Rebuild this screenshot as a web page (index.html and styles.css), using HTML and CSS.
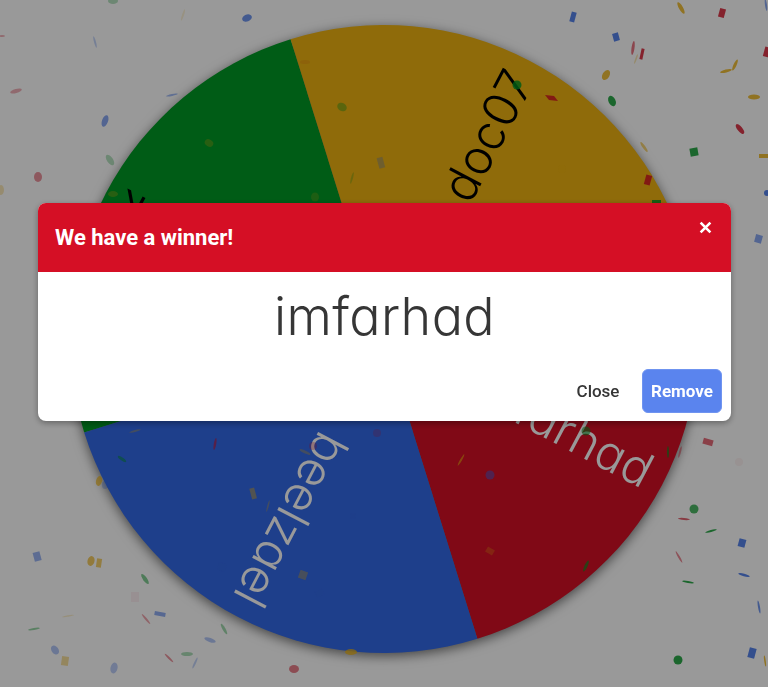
FILE: index.html
```html
<!DOCTYPE html>
<html lang="en">
<head>
<meta charset="utf-8">
<title>We have a winner</title>
<link rel="stylesheet" href="styles.css">
</head>
<body>
<main class="stage">
<svg class="canvas" viewBox="0 0 768 687" width="768" height="687">
  <g class="wheel">
    <path class="s-green" d="M384 339L84.2 432.4A314 314 0 0 1 290.6 39.2Z"/>
    <path class="s-yellow" d="M384 339L290.6 39.2A314 314 0 0 1 683.8 245.6Z"/>
    <path class="s-red" d="M384 339L683.8 245.6A314 314 0 0 1 477.4 638.8Z"/>
    <path class="s-blue" d="M384 339L477.4 638.8A314 314 0 0 1 84.2 432.4Z"/>
  </g>
  <text class="name dark" transform="translate(384 339) rotate(-152.3) translate(298 14)" text-anchor="end">k</text>
  <text class="name dark" transform="translate(384 339) rotate(-62.3) translate(298 14)" text-anchor="end">doc07</text>
  <text class="name light" transform="translate(384 339) rotate(27.7) translate(298 13)" text-anchor="end">imfarhad</text>
  <text class="name light" transform="translate(384 339) rotate(117.7) translate(298 15)" text-anchor="end">beelzael</text>

  <g class="c-g">
    <ellipse cx="113" cy="1" rx="5" ry="3" opacity=".35"/>
    <ellipse cx="110" cy="160" rx="3" ry="6" transform="rotate(-35 110 160)" opacity=".35"/>
    <ellipse cx="342" cy="107" rx="5" ry="4" transform="rotate(30 342 107)" opacity=".45"/>
    <ellipse cx="612" cy="101" rx="3.5" ry="5.5" transform="rotate(-25 612 101)"/>
    <circle cx="517" cy="85" r="4.5"/>
    <rect x="690" y="148" width="8" height="8" transform="rotate(-10 694 152)"/>
    <circle cx="586" cy="431" r="4.5" opacity=".7"/>
    <ellipse cx="122" cy="459" rx="5" ry="1.5" transform="rotate(35 122 459)" opacity=".6"/>
    <ellipse cx="145" cy="579" rx="2" ry="6" transform="rotate(-35 145 579)" opacity=".6"/>
    <ellipse cx="34" cy="629" rx="6" ry="1" transform="rotate(-10 34 629)" opacity=".5"/>
    <ellipse cx="224" cy="629" rx="1.5" ry="6" transform="rotate(-30 224 629)" opacity=".45"/>
    <ellipse cx="187" cy="654" rx="6" ry="2" opacity=".4"/>
    <ellipse cx="586" cy="566" rx="1.5" ry="6" transform="rotate(25 586 566)" opacity=".8"/>
    <ellipse cx="668" cy="452" rx="1" ry="6" opacity=".8"/>
    <circle cx="694" cy="509" r="4.5" opacity=".85"/>
    <ellipse cx="711" cy="531" rx="6" ry="1" transform="rotate(-15 711 531)"/>
    <ellipse cx="688" cy="582" rx="6" ry="1" transform="rotate(10 688 582)"/>
    <circle cx="678" cy="660" r="4.5"/>
    <ellipse cx="352" cy="178" rx="1" ry="6" transform="rotate(15 352 178)" opacity=".3"/>
    <rect x="652" y="200" width="9" height="3"/>
  </g>
  <g class="c-b">
    <ellipse cx="247" cy="18" rx="5" ry="3.5" transform="rotate(-20 247 18)" opacity=".85"/>
    <ellipse cx="95" cy="42" rx="1" ry="6" transform="rotate(-15 95 42)" opacity=".35"/>
    <ellipse cx="172" cy="95" rx="6" ry="1" transform="rotate(-12 172 95)" opacity=".55"/>
    <ellipse cx="105" cy="121" rx="3" ry="6" transform="rotate(20 105 121)" opacity=".7"/>
    <rect x="570.5" y="12" width="5" height="10" transform="rotate(15 573 17)"/>
    <rect x="613" y="33" width="6" height="8" transform="rotate(-15 616 37)"/>
    <ellipse cx="766" cy="5" rx="1" ry="6" transform="rotate(-8 766 5)" opacity=".7"/>
    <circle cx="767" cy="193" r="3"/>
    <rect x="755" y="235" width="7" height="8" transform="rotate(15 759 239)" opacity=".7"/>
    <circle cx="490" cy="475" r="4.5" opacity=".6"/>
    <ellipse cx="105" cy="485" rx="3" ry="4" opacity=".35"/>
    <rect x="33.5" y="552" width="7" height="9" transform="rotate(-15 37 556)" opacity=".6"/>
    <rect x="154.5" y="612" width="11" height="4" transform="rotate(10 160 614)" opacity=".65"/>
    <ellipse cx="210" cy="640" rx="6" ry="2" transform="rotate(20 210 640)" opacity=".45"/>
    <ellipse cx="55" cy="650" rx="3.5" ry="5" transform="rotate(-35 55 650)" opacity=".45"/>
    <ellipse cx="114" cy="668" rx="3.5" ry="5.5" transform="rotate(15 114 668)" opacity=".4"/>
    <ellipse cx="195" cy="663" rx="1" ry="6" transform="rotate(25 195 663)" opacity=".35"/>
    <rect x="738.5" y="539" width="7" height="8" transform="rotate(15 742 543)"/>
    <ellipse cx="744" cy="575" rx="6" ry="1.2" transform="rotate(15 744 575)"/>
    <ellipse cx="759" cy="607" rx="1" ry="6.5" transform="rotate(-10 759 607)" opacity=".85"/>
    <rect x="748.5" y="648" width="7" height="10" transform="rotate(15 752 653)"/>
    <rect x="378" y="157" width="6" height="11" transform="rotate(-15 382 163)" opacity=".35"/>
    <rect x="316" y="590" width="8" height="6" transform="rotate(-25 320 594)" opacity=".35"/>
    <rect x="218" y="563" width="8" height="8" transform="rotate(15 222 567)" opacity=".3"/>
    <circle cx="353" cy="516" r="3" opacity=".12"/>
  </g>
  <g class="c-r">
    <ellipse cx="2" cy="36" rx="3" ry="1" opacity=".4"/>
    <ellipse cx="16" cy="91" rx="6" ry="2" transform="rotate(-15 16 91)" opacity=".4"/>
    <ellipse cx="38" cy="177" rx="4" ry="5" opacity=".55"/>
    <rect x="719" y="8.5" width="6" height="9" transform="rotate(15 722 13)"/>
    <ellipse cx="633" cy="48" rx="1.5" ry="7" transform="rotate(8 633 48)" opacity=".7"/>
    <rect x="640.5" y="48.5" width="3" height="11" transform="rotate(12 642 54)"/>
    <rect x="764" y="47" width="6" height="10" transform="rotate(15 767 52)"/>
    <ellipse cx="740" cy="129" rx="2.5" ry="6" transform="rotate(-40 740 129)"/>
    <path d="M545 95l9 1 4 5-9-1z"/>
    <rect x="645" y="175" width="6" height="10" transform="rotate(15 648 180)"/>
    <rect x="703" y="439" width="10" height="6" transform="rotate(15 708 442)" opacity=".75"/>
    <ellipse cx="680" cy="452" rx="1" ry="6" transform="rotate(15 680 452)" opacity=".5"/>
    <circle cx="377" cy="433" r="4" opacity=".25"/>
    <circle cx="313" cy="446" r="4" opacity=".3"/>
    <ellipse cx="215" cy="444" rx="1.2" ry="6" transform="rotate(10 215 444)" opacity=".7"/>
    <ellipse cx="146" cy="619" rx="1" ry="6.5" transform="rotate(-40 146 619)" opacity=".45"/>
    <ellipse cx="169" cy="658" rx="1" ry="6" transform="rotate(-45 169 658)" opacity=".55"/>
    <ellipse cx="294" cy="669" rx="5" ry="4" opacity=".65"/>
    <rect x="131" y="592" width="8" height="10" opacity=".07"/>
    <ellipse cx="684" cy="519" rx="6" ry="1" transform="rotate(5 684 519)" opacity=".8"/>
    <ellipse cx="679" cy="557" rx="1" ry="6.5" transform="rotate(-30 679 557)" opacity=".6"/>
    <circle cx="739" cy="462" r="4" opacity=".06"/>
    <ellipse cx="305" cy="62" rx="5" ry="2" opacity=".1"/>
  </g>
  <g class="c-y">
    <ellipse cx="183" cy="15" rx="1" ry="6" transform="rotate(18 183 15)" opacity=".2"/>
    <ellipse cx="1" cy="190" rx="3" ry="5" opacity=".35"/>
    <ellipse cx="209" cy="143" rx="4.5" ry="3.5" transform="rotate(30 209 143)" opacity=".35"/>
    <ellipse cx="113" cy="194" rx="5" ry="3" opacity=".35"/>
    <ellipse cx="315" cy="197" rx="4" ry="4.5" opacity=".25"/>
    <ellipse cx="681" cy="8" rx="2" ry="6.5" transform="rotate(-30 681 8)"/>
    <ellipse cx="636" cy="59" rx=".8" ry="5" transform="rotate(20 636 59)" opacity=".4"/>
    <ellipse cx="606" cy="75" rx="3.5" ry="5.5" transform="rotate(30 606 75)"/>
    <ellipse cx="735" cy="65" rx="1.5" ry="6" transform="rotate(25 735 65)"/>
    <ellipse cx="726" cy="71" rx="6" ry="1.5" transform="rotate(-15 726 71)"/>
    <ellipse cx="754" cy="97" rx="6" ry="2.5"/>
    <ellipse cx="644" cy="147" rx="1.5" ry="6" transform="rotate(-35 644 147)" opacity=".7"/>
    <rect x="759" y="154" width="9" height="4"/>
    <ellipse cx="562" cy="169" rx="4" ry="4" opacity=".2"/>
    <ellipse cx="461" cy="460" rx="1" ry="6.5" transform="rotate(30 461 460)" opacity=".75"/>
    <ellipse cx="99" cy="481" rx="3" ry="5" transform="rotate(15 99 481)" opacity=".8"/>
    <rect x="250.5" y="488" width="5" height="11" transform="rotate(-15 253 493)" opacity=".55"/>
    <ellipse cx="268" cy="506" rx=".8" ry="6" transform="rotate(15 268 506)" opacity=".4"/>
    <ellipse cx="305" cy="452" rx="6" ry="1.5" transform="rotate(25 305 452)" opacity=".4"/>
    <rect x="299" y="571" width="8" height="8" transform="rotate(20 303 575)" opacity=".45"/>
    <ellipse cx="91" cy="561" rx="3.5" ry="5" transform="rotate(15 91 561)" opacity=".8"/>
    <rect x="96.5" y="558.5" width="5" height="9" transform="rotate(8 99 563)" opacity=".75"/>
    <ellipse cx="68" cy="616" rx="6" ry=".8" transform="rotate(-10 68 616)" opacity=".25"/>
    <rect x="61.5" y="656.5" width="7" height="9" transform="rotate(8 65 661)" opacity=".5"/>
    <ellipse cx="351" cy="652" rx="6" ry="3" opacity=".9"/>
    <rect x="486" y="548" width="8" height="6" transform="rotate(30 490 551)" opacity=".35"/>
    <ellipse cx="765" cy="661" rx=".8" ry="5.5" transform="rotate(-8 765 661)"/>
    <ellipse cx="135" cy="431" rx="6" ry="1" transform="rotate(-15 135 431)" opacity=".4"/>
  </g>
</svg>

<div class="overlay">
  <section class="modal" role="dialog" aria-label="Winner">
    <header class="modal-head">
      <h1 class="modal-title">We have a winner!</h1>
      <button class="modal-x" type="button" aria-label="Close">
        <svg viewBox="0 0 12 12" width="13" height="13"><path d="M1.5 1.5L10.5 10.5M10.5 1.5L1.5 10.5"/></svg>
      </button>
    </header>
    <div class="modal-body">imfarhad</div>
    <footer class="modal-foot">
      <button class="btn btn-plain" type="button">Close</button>
      <button class="btn btn-primary" type="button">Remove</button>
    </footer>
  </section>
</div>
</main>
</body>
</html>
```
FILE: styles.css
```css
* { box-sizing: border-box; }
html, body { margin: 0; padding: 0; }
body { background: #fff; font-family: Roboto, "Liberation Sans", sans-serif; overflow: hidden; }
.stage { position: relative; width: 768px; height: 687px; overflow: hidden; }
.canvas { display: block; }
.wheel { filter: drop-shadow(0 3px 6px rgba(0,0,0,.55)); }
.s-green { fill: #009925; }
.s-yellow { fill: #eeb211; }
.s-red { fill: #d50f25; }
.s-blue { fill: #3369e8; }
.name { font-family: Inter, Lato, sans-serif; font-weight: 300; font-size: 48px; font-feature-settings: "cv11" 1; }
.dark { fill: #000; }
.light { fill: #fff; }
.c-g { fill: #009925; opacity: .82; }
.c-b { fill: #3369e8; opacity: .82; }
.c-r { fill: #d50f25; opacity: .82; }
.c-y { fill: #eeb211; opacity: .82; }

.overlay {
  position: absolute; inset: 0;
  background: rgba(0,0,0,.4);
  display: flex; align-items: flex-start; justify-content: flex-start;
  padding: 203px 37px 0 38px;
}
.modal {
  width: 693px; background: #fff; border-radius: 8px; overflow: hidden;
  box-shadow: 0 2px 6px rgba(0,0,0,.35);
}
.modal-head {
  height: 69px; background: #d50f25; color: #fff;
  display: flex; align-items: center; justify-content: space-between;
  padding: 0 19px 0 17px;
}
.modal-title { margin: 0; font-size: 22px; font-weight: 700; line-height: 1; }
.modal-x {
  align-self: flex-start; margin-top: 18px; padding: 0; border: 0; background: none;
  width: 13px; height: 13px; display: flex; cursor: pointer;
}
.modal-x path { stroke: #fff; stroke-width: 2.4; fill: none; }
.modal-body {
  height: 97px; padding-top: 12px; text-align: center;
  font-family: Inter, Lato, sans-serif; font-weight: 300; font-size: 52px; letter-spacing: .4px; line-height: 66px;
  font-feature-settings: "cv11" 1; color: #363636;
}
.modal-foot {
  display: flex; justify-content: flex-end; gap: 14px;
  padding: 0 9px 8px 0;
}
.btn {
  height: 44px; border-radius: 6px; font-family: Roboto, "Liberation Sans", sans-serif;
  font-size: 17px; cursor: pointer; padding: 0;
}
.btn-plain { background: #fff; border: 1px solid #fff; color: #363636; font-weight: 500; width: 60px; }
.btn-primary { background: #5a84ee; border: 1px solid #6f94f0; color: #fff; font-weight: 700; width: 80px; }
```
